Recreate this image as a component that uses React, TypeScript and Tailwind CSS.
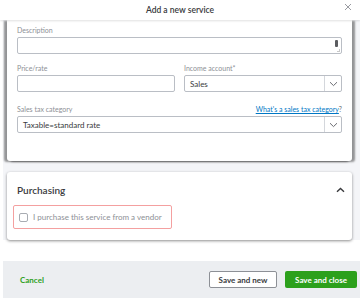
import React from 'react';

const Chevron = ({ up = false }: { up?: boolean }) => (
  <svg width="9" height="6" viewBox="0 0 9 6" className={up ? 'rotate-180' : ''}>
    <path d="M1 1.2 L4.5 4.6 L8 1.2" fill="none" stroke={up ? '#393a3d' : '#6b6c72'} strokeWidth={up ? 1.4 : 1} />
  </svg>
);

const Select = ({ value }: { value: string }) => (
  <div className="flex h-[17px] items-stretch rounded-[2px] border border-[#babec5] bg-white">
    <div className="flex flex-1 items-center pl-[5px] text-[8px] text-[#393a3d]">{value}</div>
    <div className="flex w-[17px] items-center justify-center border-l border-[#d4d7dc]">
      <Chevron />
    </div>
  </div>
);

const Label = ({ children }: { children: React.ReactNode }) => (
  <div className="mb-[3px] text-[7px] leading-[8px] text-[#8d9096]">{children}</div>
);

export default function App() {
  return (
    <div className="flex h-[298px] w-[360px] flex-col overflow-hidden bg-white font-['Lato',sans-serif]">
      {/* header */}
      <div className="relative flex h-[20px] shrink-0 items-center justify-center bg-white shadow-[0_1px_2px_rgba(0,0,0,0.12)]">
        <span className="text-[8.5px] font-semibold text-[#393a3d]">Add a new service</span>
        <svg width="8" height="8" viewBox="0 0 8 8" className="absolute right-[8px] top-[3px]">
          <path d="M1 1 L7 7 M7 1 L1 7" stroke="#8d9096" strokeWidth="0.9" />
        </svg>
      </div>

      {/* body */}
      <div className="ml-[3px] flex flex-1 flex-col bg-[#f4f5f8]">
        <div className="ml-[4px] mr-[8px] h-[141px] rounded-b-[3px] bg-white px-[10px] pt-[6px] shadow-[-3px_1px_2px_rgba(0,0,0,0.4),3px_1px_2px_rgba(0,0,0,0.4)]">
          <Label>Description</Label>
          <div className="relative h-[17px] rounded-[2px] border border-[#babec5] bg-white">
            <div className="absolute right-[3px] top-[2px] h-[7px] w-[3px] rounded-[1px] bg-[#5b5c60]" />
            <div className="absolute bottom-[1px] right-[1px] h-[3px] w-[3px] border-b border-r border-[#c9c9c9]" />
          </div>

          <div className="mt-[10px] flex gap-[9px]">
            <div className="flex-1">
              <Label>Price/rate</Label>
              <div className="h-[17px] rounded-[2px] border border-[#babec5] bg-white" />
            </div>
            <div className="flex-1">
              <Label>Income account*</Label>
              <Select value="Sales" />
            </div>
          </div>

          <div className="mt-[13px] flex items-end justify-between">
            <Label>Sales tax category</Label>
            <div className="mb-[3px] text-[7px] leading-[8px]">
              <span className="text-[#0077c5] underline">What's a sales tax category</span>
              <span className="text-[#6b6c72]">?</span>
            </div>
          </div>
          <Select value="Taxable=standard rate" />
        </div>

        <div className="ml-[4px] mr-[8px] mt-[11px] h-[68px] rounded-[3px] bg-white px-[10px] shadow-[0_1px_3px_rgba(0,0,0,0.45)]">
          <div className="flex h-[33px] items-center justify-between pt-[3px]">
            <span className="text-[10px] font-semibold text-[#393a3d]">Purchasing</span>
            <span className="mr-[-3px]">
              <Chevron up />
            </span>
          </div>
          <div className="ml-[-4px] flex h-[24px] w-[159px] items-center gap-[5px] rounded-[2px] border border-[#f4a0a0] px-[5px]">
            <div className="h-[9px] w-[9px] rounded-[2px] border border-[#a8acb2] bg-white" />
            <span className="text-[8px] text-[#8d9096]">I purchase this service from a vendor</span>
          </div>
        </div>
      </div>

      {/* footer */}
      <div className="ml-[3px] mt-[21px] flex h-[37px] shrink-0 items-center justify-between bg-[#eceef1] pl-[17px] pr-[3px]">
        <span className="text-[8px] font-bold text-[#2ca01c]">Cancel</span>
        <div className="flex gap-[8px]">
          <button className="flex h-[17px] w-[68px] items-center justify-center rounded-[2px] border border-[#8d9096] bg-white text-[8px] font-bold text-[#393a3d]">
            Save and new
          </button>
          <button className="flex h-[17px] w-[72px] items-center justify-center rounded-[2px] bg-[#2ca01c] text-[8px] font-bold text-white">
            Save and close
          </button>
        </div>
      </div>
    </div>
  );
}
